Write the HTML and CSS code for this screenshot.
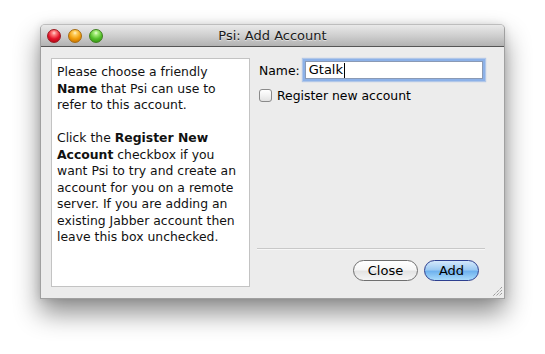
FILE: index.html
```html
<!DOCTYPE html>
<html lang="en">
	<head>
		<meta charset="UTF-8" />
		<title>Psi: Add Account</title>
		<link rel="stylesheet" href="styles.css">
	</head>
	<body>
		<div class="window">
			<div class="titlebar">
				<div class="lights">
					<span class="light red"></span>
					<span class="light orange"></span>
					<span class="light green"></span>
				</div>
				<div class="title">Psi: Add Account</div>
				<div></div>
			</div>

			<div class="content">
				<div class="help">
					<p>Please choose a friendly<br /><b>Name</b> that Psi can use to<br />refer to this account.</p>
					<p>Click the <b>Register New</b><br /><b>Account</b> checkbox if you<br />want Psi to try and create an<br />account for you on a remote<br />server. If you are adding an<br />existing Jabber account then<br />leave this box unchecked.</p>
				</div>

				<div class="form">
					<div class="name-row">
						<span class="label">Name:</span>
						<div class="field">Gtalk<span class="caret"></span></div>
					</div>
					<div class="check">
						<span class="box"></span>
						<span>Register new account</span>
					</div>
					<div class="spacer"></div>
					<div class="separator"></div>
					<div class="buttons">
						<button class="btn">Close</button>
						<button class="btn default">Add</button>
					</div>
				</div>
			</div>

			<svg class="grip" width="11" height="11" viewBox="0 0 11 11">
				<!-- resize grip -->
				<path d="M10 1 L1 10 M10 4 L4 10 M10 7 L7 10" stroke="#7a7a7a" stroke-width="1" stroke-dasharray="1 1" fill="none" />
			</svg>
		</div>
	</body>
</html>
```

FILE: styles.css
```css
html {
	height: 100%;
}

body {
	margin: 0;
	height: 100%;
	box-sizing: border-box;
	overflow: hidden;
	padding: 24px 0 0 40px;
	background: #ffffff;
	font-family: "DejaVu Sans", "Liberation Sans", sans-serif;
	font-size: 12.4px;
	color: #000;
}

.window {
	position: relative;
	width: 463px;
	height: 273px;
	border: 1px solid #a0a0a0;
	border-top-color: #bdbdbd;
	border-radius: 5px 5px 0 0;
	background: #ececec;
	box-shadow: 0 14px 26px rgba(0, 0, 0, 0.45), 0 0 8px rgba(0, 0, 0, 0.12);
	display: flex;
	flex-direction: column;
}

.titlebar {
	height: 21px;
	border-bottom: 1px solid #555;
	border-radius: 4px 4px 0 0;
	background: linear-gradient(to bottom, #e9e9e9 0%, #d2d2d2 45%, #b2b2b2 100%);
	display: grid;
	grid-template-columns: 1fr auto 1fr;
	align-items: center;
}

.lights {
	display: flex;
	gap: 7px;
	padding-left: 6px;
	padding-top: 1px;
}

.light {
	width: 14px;
	height: 14px;
	border-radius: 50%;
	box-sizing: border-box;
}

.red {
	background: radial-gradient(circle at 50% 25%, #ffd8d8 0, #ff8080 18%, #e3132a 55%, #a2000e 100%);
	border: 1px solid #9a1a20;
}

.orange {
	background: radial-gradient(circle at 50% 25%, #fff3cc 0, #ffd060 18%, #f09d0a 55%, #b86300 100%);
	border: 1px solid #a46b12;
}

.green {
	background: radial-gradient(circle at 50% 25%, #e9ffd6 0, #a6ee7a 18%, #54bf2a 55%, #2b8a0b 100%);
	border: 1px solid #3d7f1f;
}

.title {
	font-size: 13px;
	color: #1a1a1a;
	text-shadow: 0 1px 0 rgba(255, 255, 255, 0.5);
}

.content {
	flex: 1;
	display: flex;
	gap: 7px;
	padding: 11px 19px 11px 10px;
}

.help {
	width: 192px;
	border: 1px solid #c3c3c3;
	background: #fff;
	padding: 5px 0 0 5px;
	line-height: 16.5px;
	white-space: nowrap;
	color: #111;
}

.help p {
	margin: 0 0 16.5px 0;
}

.form {
	flex: 1;
	display: flex;
	flex-direction: column;
	padding-bottom: 6px;
}

.name-row {
	display: flex;
	align-items: center;
	padding-left: 2px;
	gap: 5px;
}

.field {
	flex: 1;
	height: 16px;
	margin: 3px 2px 3px 0;
	border: 1px solid #8a9ab5;
	background: #fff;
	box-shadow: 0 0 0 2px #8cb1e8, 0 0 1px 3px rgba(130, 170, 230, 0.55);
	padding: 0 3px;
	font-size: 13px;
	line-height: 16px;
	display: flex;
	align-items: center;
}

.caret {
	display: inline-block;
	width: 1px;
	height: 15px;
	background: #000;
	margin-left: 1px;
}

.check {
	display: flex;
	align-items: center;
	gap: 5px;
	margin-top: 6px;
	padding-left: 2px;
}

.box {
	width: 13px;
	height: 13px;
	box-sizing: border-box;
	border: 1px solid #8a8a8a;
	border-radius: 3px;
	background: linear-gradient(to bottom, #ffffff 0%, #f2f2f2 50%, #e2e2e2 100%);
}

.spacer {
	flex: 1;
}

.separator {
	height: 1px;
	background: #c8c8c8;
	border-bottom: 1px solid #f7f7f7;
}

.buttons {
	display: flex;
	justify-content: flex-end;
	gap: 6px;
	margin-top: 10px;
	padding-right: 6px;
}

.btn {
	height: 21px;
	border-radius: 11px;
	border: 1px solid #6f6f6f;
	background: linear-gradient(to bottom, #ffffff 0%, #f6f6f6 45%, #e4e4e4 55%, #f5f5f5 100%);
	font-family: "DejaVu Sans", "Liberation Sans", sans-serif;
	font-size: 13px;
	color: #000;
	padding: 0;
	width: 65px;
}

.btn.default {
	width: 55px;
	border-color: #2d3f8f;
	background: linear-gradient(to bottom, #d4e8fb 0%, #9ecbf3 45%, #6fb2ee 55%, #a9dbfb 100%);
}

.grip {
	position: absolute;
	right: 1px;
	bottom: 1px;
}
```
